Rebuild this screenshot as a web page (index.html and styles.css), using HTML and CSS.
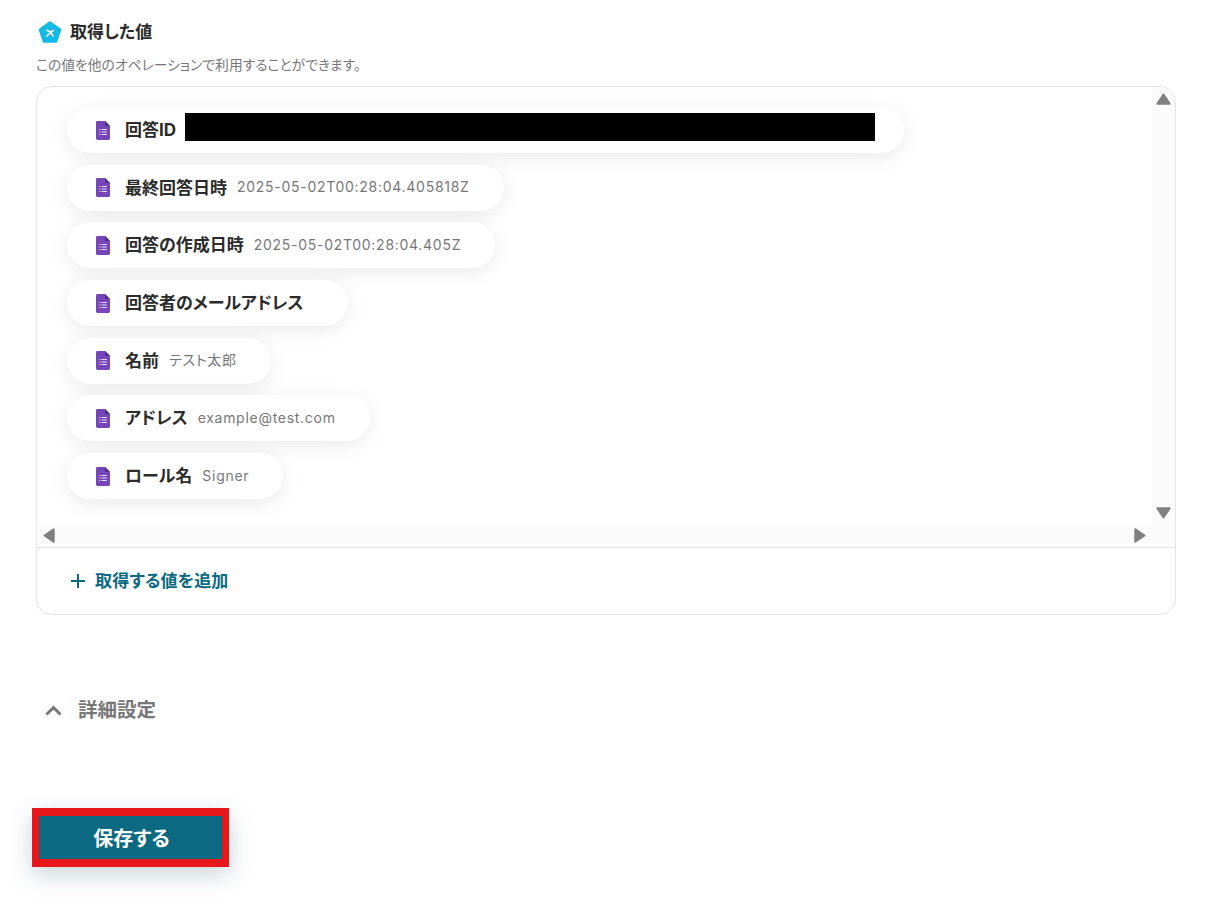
FILE: index.html
```html
<!DOCTYPE html>
<html lang="ja">
<head>
<meta charset="utf-8">
<title>取得した値</title>
<link rel="stylesheet" href="styles.css">
</head>
<body>
<main class="page">
  <h2 class="title">
    <svg class="logo" viewBox="0 0 24 24" width="24" height="24"><path d="M12 1 L22.6 8.6 Q23.6 9.4 23.2 10.6 L19.4 21.6 Q19 22.8 17.7 22.8 L6.3 22.8 Q5 22.8 4.6 21.6 L0.8 10.6 Q0.4 9.4 1.4 8.6 Z" fill="#14b9e6"/><path d="M9 10.4 Q12.4 11 15 16 M15.2 10.4 Q11.8 13 8.8 16" stroke="#fff" stroke-width="1.6" fill="none" stroke-linecap="round"/></svg>
    <span>取得した値</span>
  </h2>
  <p class="sub">この値を他のオペレーションで利用することができます。</p>

  <section class="card">
    <div class="scroller">
      <div class="viewport">
        <div class="chip">
          <svg class="ficon" viewBox="0 0 14 19" width="14" height="19"><use href="#form"/></svg>
          <b>回答ID</b><span class="mask"></span>
        </div>
        <div class="chip">
          <svg class="ficon" viewBox="0 0 14 19" width="14" height="19"><use href="#form"/></svg>
          <b>最終回答日時</b><span class="val">2025-05-02T00:28:04.405818Z</span>
        </div>
        <div class="chip">
          <svg class="ficon" viewBox="0 0 14 19" width="14" height="19"><use href="#form"/></svg>
          <b>回答の作成日時</b><span class="val">2025-05-02T00:28:04.405Z</span>
        </div>
        <div class="chip">
          <svg class="ficon" viewBox="0 0 14 19" width="14" height="19"><use href="#form"/></svg>
          <b>回答者のメールアドレス</b><span class="val"></span>
        </div>
        <div class="chip">
          <svg class="ficon" viewBox="0 0 14 19" width="14" height="19"><use href="#form"/></svg>
          <b>名前</b><span class="val">テスト太郎</span>
        </div>
        <div class="chip">
          <svg class="ficon" viewBox="0 0 14 19" width="14" height="19"><use href="#form"/></svg>
          <b>アドレス</b><span class="val">example@test.com</span>
        </div>
        <div class="chip">
          <svg class="ficon" viewBox="0 0 14 19" width="14" height="19"><use href="#form"/></svg>
          <b>ロール名</b><span class="val">Signer</span>
        </div>
      </div>
      <div class="vbar">
        <svg viewBox="0 0 15 12" width="15" height="12"><path d="M7.5 1.5 L13.7 10.7 H1.3 Z" fill="#808080" stroke="#808080" stroke-width="2" stroke-linejoin="round"/></svg>
        <svg viewBox="0 0 15 12" width="15" height="12"><path d="M1.3 1.3 H13.7 L7.5 10.5 Z" fill="#808080" stroke="#808080" stroke-width="2" stroke-linejoin="round"/></svg>
      </div>
      <div class="hbar">
        <svg viewBox="0 0 12 15" width="12" height="15"><path d="M10.7 1.3 V13.7 L1.5 7.5 Z" fill="#808080" stroke="#808080" stroke-width="2" stroke-linejoin="round"/></svg>
        <svg viewBox="0 0 12 15" width="12" height="15"><path d="M1.3 1.3 V13.7 L10.5 7.5 Z" fill="#808080" stroke="#808080" stroke-width="2" stroke-linejoin="round"/></svg>
      </div>
    </div>
    <div class="card-foot">
      <svg viewBox="0 0 16 16" width="16" height="16"><path d="M8 1 V15 M1 8 H15" stroke="#0b6982" stroke-width="2" fill="none"/></svg>
      <span>取得する値を追加</span>
    </div>
  </section>

  <div class="details">
    <svg viewBox="0 0 17 11" width="17" height="11"><path d="M1.5 9.5 L8.5 2.5 L15.5 9.5" stroke="#777" stroke-width="3" fill="none"/></svg>
    <span>詳細設定</span>
  </div>

  <div class="save-outline">
    <button class="save">保存する</button>
  </div>
</main>

<svg class="defs" width="0" height="0">
  <symbol id="form" viewBox="0 0 14 19">
    <path d="M1.4 0 H9 L14 5 V17.6 Q14 19 12.6 19 H1.4 Q0 19 0 17.6 V1.4 Q0 0 1.4 0 Z" fill="#7646b8"/>
    <path d="M9 0 L14 5 H9 Z" fill="#4f2d8f"/>
    <path d="M3.2 8.5 H4.4 M5.6 8.5 H10.8 M3.2 11 H4.4 M5.6 11 H10.8 M3.2 13.5 H4.4 M5.6 13.5 H10.8" stroke="#e6dcf5" stroke-width="1"/>
  </symbol>
</svg>
</body>
</html>
```

FILE: styles.css
```css
* { box-sizing: border-box; }

html, body {
  margin: 0;
  padding: 0;
  background: #fff;
}

body {
  font-family: Inter, "Noto Sans CJK JP", sans-serif;
  font-feature-settings: "palt";
  color: #2b2b2b;
  overflow: hidden;
  height: 900px;
}

.page {
  width: 1140px;
  margin-left: 36px;
  padding-top: 20px;
}

.title {
  display: flex;
  align-items: center;
  gap: 8px;
  margin: 0 0 0 2px;
  height: 24px;
  font-size: 17px;
  line-height: 22px;
  font-weight: 700;
}

.sub {
  margin: 12px 0 0;
  height: 18px;
  line-height: 18px;
  font-size: 13.8px;
  color: #777;
}

.card {
  margin-top: 12px;
  height: 529px;
  border: 1px solid #e4e4e4;
  border-radius: 16px;
  overflow: hidden;
}

.scroller {
  display: grid;
  grid-template-columns: 1fr 23px;
  grid-template-rows: 437px 23px;
  border-bottom: 1px solid #e4e4e4;
  height: 461px;
}

.viewport {
  padding: 20px 0 0 30px;
  display: flex;
  flex-direction: column;
  align-items: flex-start;
  gap: 11.7px;
  overflow: hidden;
}

.chip {
  display: flex;
  align-items: center;
  height: 46px;
  flex: none;
  padding: 0 34px 0 29px;
  border-radius: 23px;
  background: #fff;
  box-shadow: 0 4px 20px rgba(0, 0, 0, 0.09);
}

.ficon {
  flex: none;
  margin-right: 15px;
}

.chip b {
  font-size: 17px;
  line-height: 20px;
  font-weight: 700;
  white-space: nowrap;
}

.val {
  margin-left: 10px;
  padding-bottom: 1px;
  font-size: 14px;
  line-height: 20px;
  letter-spacing: 0.72px;
  color: #777;
  white-space: nowrap;
}

.mask {
  width: 690px;
  height: 28px;
  margin: -6px -5px 0 9px;
  background: #000;
}

.vbar {
  background: #fbfbfb;
  display: flex;
  flex-direction: column;
  justify-content: space-between;
  align-items: center;
  padding: 6px 0 5px;
}

.hbar {
  grid-column: 1 / 3;
  background: #fbfbfb;
  display: flex;
  justify-content: space-between;
  align-items: center;
  padding: 0 29px 0 6px;
}

.card-foot {
  display: flex;
  align-items: center;
  gap: 9px;
  height: 67px;
  padding: 0 0 1px 33px;
  font-size: 17px;
  line-height: 20px;
  font-weight: 700;
  letter-spacing: 0.15px;
  color: #0b6982;
}

.details {
  display: flex;
  align-items: center;
  gap: 16px;
  margin-top: 82px;
  padding-left: 9px;
  height: 26px;
  font-size: 19.5px;
  line-height: 24px;
  font-weight: 700;
  color: #777;
}

.save-outline {
  margin: 85px 0 0 -4px;
  width: 197px;
  height: 59px;
  padding: 8px 7px;
  background: #e8171c;
  box-shadow: 0 8px 24px rgba(11, 60, 80, 0.22);
}

.save {
  display: block;
  width: 100%;
  height: 100%;
  border: 0;
  padding: 0 0 0 2px;
  background: #0b6982;
  color: #fff;
  font: 700 20px Inter, "Noto Sans CJK JP", sans-serif;
  font-feature-settings: "palt";
}

.defs {
  position: absolute;
}
```
